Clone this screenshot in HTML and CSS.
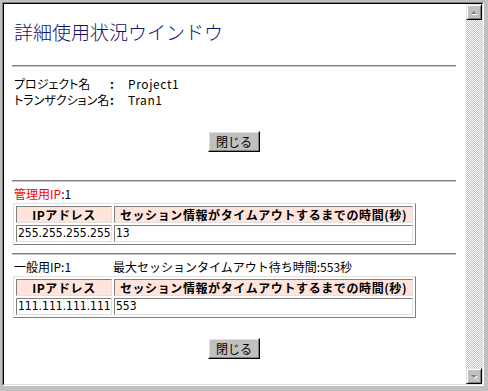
FILE: index.html
```html
<!DOCTYPE html>
<html lang="ja">
<head>
    <meta charset="UTF-8">
    <title>詳細使用状況ウインドウ</title>
    <link rel="stylesheet" href="styles.css">
</head>
<body>
    <!-- Window frame -->
    <div class="window">
        <div class="well">
            <div class="page">
                <h1 class="title">詳細使用状況ウインドウ</h1>
                <hr class="rule">

                <!-- Project info -->
                <div class="info">
                    <span>プロジェクト名</span><span class="colon">:</span><span class="value">Project1</span>
                    <span>トランザクション名</span><span class="colon">:</span><span class="value">Tran1</span>
                </div>

                <div class="actions">
                    <button class="btn">閉じる</button>
                </div>

                <hr class="rule">

                <!-- Admin IP -->
                <div class="ip-head"><span class="admin">管理用IP</span>:1</div>
                <table class="ip-table">
                    <tr>
                        <th class="col-ip">IPアドレス</th>
                        <th>セッション情報がタイムアウトするまでの時間(秒)</th>
                    </tr>
                    <tr>
                        <td class="col-ip">255.255.255.255</td>
                        <td>13</td>
                    </tr>
                </table>

                <hr class="rule rule-tight">

                <!-- General IP -->
                <div class="ip-head general">
                    <span class="general-count">一般用IP:1</span>
                    <span>最大セッションタイムアウト待ち時間:553秒</span>
                </div>
                <table class="ip-table">
                    <tr>
                        <th class="col-ip">IPアドレス</th>
                        <th>セッション情報がタイムアウトするまでの時間(秒)</th>
                    </tr>
                    <tr>
                        <td class="col-ip">111.111.111.111</td>
                        <td>553</td>
                    </tr>
                </table>

                <div class="actions actions-bottom">
                    <button class="btn">閉じる</button>
                </div>
            </div>

            <!-- Vertical scrollbar -->
            <div class="scrollbar">
                <div class="arrow">
                    <svg width="14" height="14" viewBox="0 0 14 14">
                        <path d="M4 9 L10 9 L7 6 Z" fill="#ffffff" transform="translate(1 1)"/>
                        <path d="M4 9 L10 9 L7 6 Z" fill="#808080"/>
                    </svg>
                </div>
                <div class="track"></div>
                <div class="arrow">
                    <svg width="14" height="14" viewBox="0 0 14 14">
                        <path d="M4 6 L10 6 L7 9 Z" fill="#ffffff" transform="translate(1 1)"/>
                        <path d="M4 6 L10 6 L7 9 Z" fill="#808080"/>
                    </svg>
                </div>
            </div>
        </div>
    </div>
</body>
</html>
```

FILE: styles.css
```css
body {
    margin: 0;
    width: 488px;
    height: 391px;
    overflow: hidden;
    background-color: #c0c0c0;
    font-family: "Noto Sans CJK JP", sans-serif;
    font-size: 12px;
    color: #000;
}

/* Window frame: sunken classic border */
.window {
    margin: 2px 4px 0 2px;
    height: 384px;
    box-sizing: border-box;
    border: 1px solid;
    border-color: #808080 #ffffff #ffffff #808080;
}

.well {
    height: 100%;
    box-sizing: border-box;
    border: 1px solid;
    border-color: #000000 #dfdfdf #dfdfdf #000000;
    display: flex;
}

.page {
    flex: 1;
    background-color: #ffffff;
    padding: 0 10px 0 8px;
    overflow: hidden;
}

.title {
    margin: 16px 0 0 2px;
    font-size: 19px;
    line-height: 24px;
    font-weight: 300;
    color: #101068;
}

.rule {
    margin: 21px 0 0 0;
    height: 0;
    border: 0;
    border-top: 1px solid #808080;
    border-bottom: 1px solid #c8c8c8;
}

/* Project info */
.info {
    margin: 9px 0 0 2px;
    display: grid;
    grid-template-columns: 96px 18px auto;
    line-height: 16px;
    font-feature-settings: "palt";
}

.colon {
    font-weight: bold;
}

.value {
    letter-spacing: 0.6px;
}

.actions {
    margin-top: 23px;
    display: flex;
    justify-content: center;
}

.actions + .rule {
    margin-top: 28px;
}

.actions-bottom {
    margin-top: 20px;
}

.btn {
    width: 52px;
    height: 21px;
    padding: 0;
    font-family: "Noto Sans CJK JP", sans-serif;
    font-size: 12px;
    line-height: 17px;
    color: #000;
    background-color: #c0c0c0;
    border: 1px solid;
    border-color: #ffffff #000000 #000000 #ffffff;
    box-shadow: inset -1px -1px 0 #808080, inset 1px 1px 0 #dfdfdf;
}

/* IP sections */
.ip-head {
    margin: 4px 0 0 2px;
    line-height: 16px;
}

.admin {
    color: #ff0000;
}

.general {
    display: flex;
}

.general-count {
    width: 99px;
}

.rule-tight {
    margin-top: 8px;
}

.ip-table {
    margin: 1px 0 0 1px;
    width: 403px;
    table-layout: fixed;
    border-collapse: separate;
    border-spacing: 2px;
    border: 1px solid;
    border-color: #e0e0e0 #808080 #808080 #e0e0e0;
}

.ip-table th,
.ip-table td {
    padding: 0;
    line-height: 15px;
    border: 1px solid;
    border-color: #808080 #e0e0e0 #e0e0e0 #808080;
    white-space: nowrap;
    overflow: hidden;
}

.ip-table th {
    background-color: #ffe4dc;
    font-weight: bold;
    text-align: center;
    font-size: 12px;
    letter-spacing: 0.6px;
}

.ip-table td {
    padding-left: 1px;
    font-family: "DejaVu Sans Condensed", "Liberation Sans", sans-serif;
    font-size: 12px;
}

.ip-table .col-ip {
    width: 94px;
}

.ip-table td.col-ip {
    width: 93px;
}

/* Scrollbar */
.scrollbar {
    width: 16px;
    display: flex;
    flex-direction: column;
}

.arrow {
    width: 16px;
    height: 16px;
    box-sizing: border-box;
    background-color: #c0c0c0;
    border: 1px solid;
    border-color: #dfdfdf #000000 #000000 #dfdfdf;
    box-shadow: inset 1px 1px 0 #ffffff, inset -1px -1px 0 #808080;
}

.arrow svg {
    display: block;
}

.track {
    flex: 1;
    background-color: #ffffff;
    background-image: conic-gradient(#c0c0c0 25%, #ffffff 0 50%, #c0c0c0 0 75%, #ffffff 0);
    background-size: 2px 2px;
}
```
